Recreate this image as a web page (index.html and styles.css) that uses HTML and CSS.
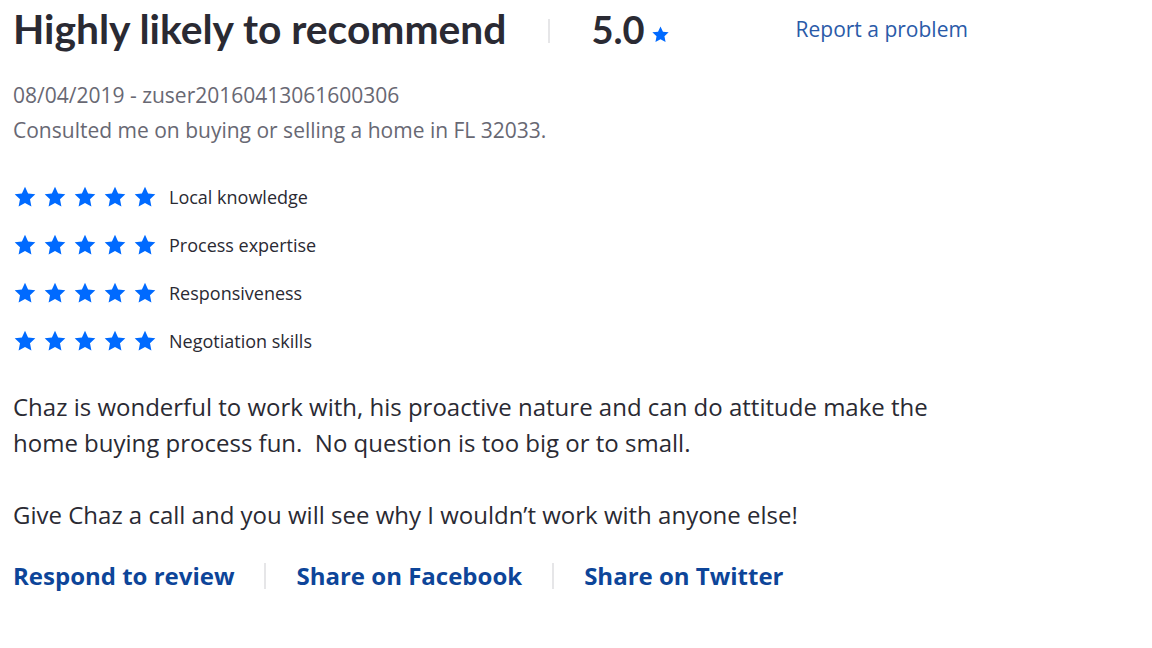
FILE: index.html
```html
<!DOCTYPE html>
<html>
<head>
<meta charset="utf-8">
<link rel="stylesheet" href="styles.css">
</head>
<body>
<div class="review">
  <div class="header">
    <h1 class="title">Highly likely to recommend</h1>
    <span class="sep"></span>
    <span class="score">5.0</span>
    <svg class="score-star" viewBox="0 0 24 24"><path d="M12 1.8l3.1 6.6 7.2.9-5.3 5 1.4 7.1L12 17.9l-6.4 3.5 1.4-7.1-5.3-5 7.2-.9z"/></svg>
    <a class="report" href="#">Report a problem</a>
  </div>
  <div class="meta first">08/04/2019 - zuser20160413061600306</div>
  <div class="meta">Consulted me on buying or selling a home in FL 32033.</div>
  <div class="ratings">
    <div class="rating"><span class="stars"><svg viewBox="0 0 24 24"><path d="M12 1.8l3.1 6.6 7.2.9-5.3 5 1.4 7.1L12 17.9l-6.4 3.5 1.4-7.1-5.3-5 7.2-.9z"/></svg><svg viewBox="0 0 24 24"><path d="M12 1.8l3.1 6.6 7.2.9-5.3 5 1.4 7.1L12 17.9l-6.4 3.5 1.4-7.1-5.3-5 7.2-.9z"/></svg><svg viewBox="0 0 24 24"><path d="M12 1.8l3.1 6.6 7.2.9-5.3 5 1.4 7.1L12 17.9l-6.4 3.5 1.4-7.1-5.3-5 7.2-.9z"/></svg><svg viewBox="0 0 24 24"><path d="M12 1.8l3.1 6.6 7.2.9-5.3 5 1.4 7.1L12 17.9l-6.4 3.5 1.4-7.1-5.3-5 7.2-.9z"/></svg><svg viewBox="0 0 24 24"><path d="M12 1.8l3.1 6.6 7.2.9-5.3 5 1.4 7.1L12 17.9l-6.4 3.5 1.4-7.1-5.3-5 7.2-.9z"/></svg></span><span class="label">Local knowledge</span></div>
    <div class="rating"><span class="stars"><svg viewBox="0 0 24 24"><path d="M12 1.8l3.1 6.6 7.2.9-5.3 5 1.4 7.1L12 17.9l-6.4 3.5 1.4-7.1-5.3-5 7.2-.9z"/></svg><svg viewBox="0 0 24 24"><path d="M12 1.8l3.1 6.6 7.2.9-5.3 5 1.4 7.1L12 17.9l-6.4 3.5 1.4-7.1-5.3-5 7.2-.9z"/></svg><svg viewBox="0 0 24 24"><path d="M12 1.8l3.1 6.6 7.2.9-5.3 5 1.4 7.1L12 17.9l-6.4 3.5 1.4-7.1-5.3-5 7.2-.9z"/></svg><svg viewBox="0 0 24 24"><path d="M12 1.8l3.1 6.6 7.2.9-5.3 5 1.4 7.1L12 17.9l-6.4 3.5 1.4-7.1-5.3-5 7.2-.9z"/></svg><svg viewBox="0 0 24 24"><path d="M12 1.8l3.1 6.6 7.2.9-5.3 5 1.4 7.1L12 17.9l-6.4 3.5 1.4-7.1-5.3-5 7.2-.9z"/></svg></span><span class="label">Process expertise</span></div>
    <div class="rating"><span class="stars"><svg viewBox="0 0 24 24"><path d="M12 1.8l3.1 6.6 7.2.9-5.3 5 1.4 7.1L12 17.9l-6.4 3.5 1.4-7.1-5.3-5 7.2-.9z"/></svg><svg viewBox="0 0 24 24"><path d="M12 1.8l3.1 6.6 7.2.9-5.3 5 1.4 7.1L12 17.9l-6.4 3.5 1.4-7.1-5.3-5 7.2-.9z"/></svg><svg viewBox="0 0 24 24"><path d="M12 1.8l3.1 6.6 7.2.9-5.3 5 1.4 7.1L12 17.9l-6.4 3.5 1.4-7.1-5.3-5 7.2-.9z"/></svg><svg viewBox="0 0 24 24"><path d="M12 1.8l3.1 6.6 7.2.9-5.3 5 1.4 7.1L12 17.9l-6.4 3.5 1.4-7.1-5.3-5 7.2-.9z"/></svg><svg viewBox="0 0 24 24"><path d="M12 1.8l3.1 6.6 7.2.9-5.3 5 1.4 7.1L12 17.9l-6.4 3.5 1.4-7.1-5.3-5 7.2-.9z"/></svg></span><span class="label">Responsiveness</span></div>
    <div class="rating"><span class="stars"><svg viewBox="0 0 24 24"><path d="M12 1.8l3.1 6.6 7.2.9-5.3 5 1.4 7.1L12 17.9l-6.4 3.5 1.4-7.1-5.3-5 7.2-.9z"/></svg><svg viewBox="0 0 24 24"><path d="M12 1.8l3.1 6.6 7.2.9-5.3 5 1.4 7.1L12 17.9l-6.4 3.5 1.4-7.1-5.3-5 7.2-.9z"/></svg><svg viewBox="0 0 24 24"><path d="M12 1.8l3.1 6.6 7.2.9-5.3 5 1.4 7.1L12 17.9l-6.4 3.5 1.4-7.1-5.3-5 7.2-.9z"/></svg><svg viewBox="0 0 24 24"><path d="M12 1.8l3.1 6.6 7.2.9-5.3 5 1.4 7.1L12 17.9l-6.4 3.5 1.4-7.1-5.3-5 7.2-.9z"/></svg><svg viewBox="0 0 24 24"><path d="M12 1.8l3.1 6.6 7.2.9-5.3 5 1.4 7.1L12 17.9l-6.4 3.5 1.4-7.1-5.3-5 7.2-.9z"/></svg></span><span class="label">Negotiation skills</span></div>
  </div>
  <p class="body">Chaz is wonderful to work with, his proactive nature and can do attitude make the home buying process fun.&nbsp; No question is too big or to small.<br><br>Give Chaz a call and you will see why I wouldn’t work with anyone else!</p>
  <div class="actions">
    <a href="#" class="action">Respond to review</a>
    <span class="sep small"></span>
    <a href="#" class="action">Share on Facebook</a>
    <span class="sep small"></span>
    <a href="#" class="action">Share on Twitter</a>
  </div>
</div>
</body>
</html>
```
FILE: styles.css
```css
html, body {
  margin: 0;
  padding: 0;
  background: #fff;
}
body {
  font-family: "Open Sans", "Liberation Sans", sans-serif;
  color: #2a2a33;
}
.review {
  padding: 6px 13px 0 13px;
  width: 1000px;
}
.header {
  display: flex;
  align-items: center;
  height: 46px;
  white-space: nowrap;
}
.header > * {
  flex-shrink: 0;
}
.title {
  margin: 0;
  font-family: Lato, "Open Sans", sans-serif;
  font-weight: 700;
  font-size: 40.75px;
  line-height: 46px;
  color: #2a2a33;
}
.sep {
  display: inline-block;
  width: 2px;
  height: 24px;
  background: #e6e6e8;
  margin: 4px 41px 0 42px;
}
.score {
  font-family: Lato, "Open Sans", sans-serif;
  font-weight: 700;
  font-size: 38px;
  line-height: 46px;
  color: #2a2a33;
}
.score-star {
  width: 19px;
  height: 19px;
  fill: #006aff;
  margin: 10px 0 0 6px;
}
.report {
  margin-left: 126px;
  color: #2a5aa8;
  font-size: 21px;
  text-decoration: none;
}
.meta {
  font-size: 21px;
  line-height: 35px;
  color: #686873;
}
.meta.first {
  margin-top: 26px;
}
.ratings {
  margin-top: 36px;
  display: flex;
  flex-direction: column;
  gap: 22px;
}
.rating {
  display: flex;
  align-items: center;
  height: 26px;
}
.stars {
  display: flex;
  gap: 6px;
  margin-right: 12px;
}
.stars svg {
  width: 24px;
  height: 24px;
  fill: #006aff;
}
.label {
  font-size: 18px;
  color: #2a2a33;
}
.body {
  margin: 35px 0 0 0;
  font-size: 24px;
  line-height: 36px;
  color: #2a2a33;
  width: 940px;
}
.actions {
  margin-top: 26px;
  display: flex;
  align-items: center;
}
.action {
  font-weight: 700;
  font-size: 24px;
  color: #0d4599;
  text-decoration: none;
}
.sep.small {
  height: 26px;
  margin: 0 30px 0 30px;
}
```
